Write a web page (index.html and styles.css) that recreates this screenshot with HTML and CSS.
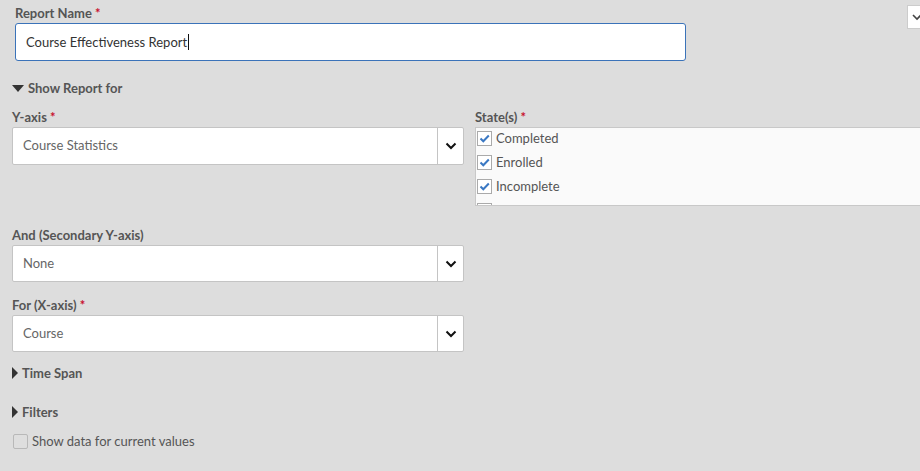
FILE: index.html
```html
<!DOCTYPE html>
<html>
<head>
<meta charset="utf-8">
<link rel="stylesheet" href="styles.css">
</head>
<body>
<div class="page">
  <div class="corner-btn"><svg width="12" height="12" viewBox="0 0 12 12"><path d="M2 4 L6 8 L10 4" fill="none" stroke="#444" stroke-width="1.6"/></svg></div>

  <div class="name-field">
    <label class="label">Report Name <span class="req">*</span></label>
    <div class="text-input">Course Effectiveness Report<span class="caret"></span></div>
  </div>

  <div class="section open"><span class="tri-down"></span>Show Report for</div>

  <div class="grid">
    <div class="field">
      <label class="label">Y-axis <span class="req">*</span></label>
      <div class="select"><span class="value">Course Statistics</span><span class="arrow"><svg width="12" height="8" viewBox="0 0 12 8"><path d="M1.5 1.5 L6 6 L10.5 1.5" fill="none" stroke="#111" stroke-width="2"/></svg></span></div>
    </div>
    <div class="field">
      <label class="label">State(s) <span class="req">*</span></label>
      <div class="listbox">
        <div class="opt"><span class="cb checked"><svg width="13" height="13" viewBox="0 0 13 13"><path d="M2.5 6.5 L5.3 9.3 L10.8 3.5" fill="none" stroke="#3a78c3" stroke-width="2"/></svg></span>Completed</div>
        <div class="opt"><span class="cb checked"><svg width="13" height="13" viewBox="0 0 13 13"><path d="M2.5 6.5 L5.3 9.3 L10.8 3.5" fill="none" stroke="#3a78c3" stroke-width="2"/></svg></span>Enrolled</div>
        <div class="opt"><span class="cb checked"><svg width="13" height="13" viewBox="0 0 13 13"><path d="M2.5 6.5 L5.3 9.3 L10.8 3.5" fill="none" stroke="#3a78c3" stroke-width="2"/></svg></span>Incomplete</div>
        <div class="opt"><span class="cb"></span></div>
      </div>
    </div>
  </div>

  <div class="field single gap-and">
    <label class="label">And (Secondary Y-axis)</label>
    <div class="select"><span class="value">None</span><span class="arrow"><svg width="12" height="8" viewBox="0 0 12 8"><path d="M1.5 1.5 L6 6 L10.5 1.5" fill="none" stroke="#111" stroke-width="2"/></svg></span></div>
  </div>

  <div class="field single gap-for">
    <label class="label">For (X-axis) <span class="req">*</span></label>
    <div class="select"><span class="value">Course</span><span class="arrow"><svg width="12" height="8" viewBox="0 0 12 8"><path d="M1.5 1.5 L6 6 L10.5 1.5" fill="none" stroke="#111" stroke-width="2"/></svg></span></div>
  </div>

  <div class="section closed gap-time"><span class="tri-right"></span>Time Span</div>
  <div class="section closed gap-filters"><span class="tri-right"></span>Filters</div>

  <div class="check-row"><span class="cb plain"></span>Show data for current values</div>
</div>
</body>
</html>
```
FILE: styles.css
```css
html, body {
  margin: 0;
  padding: 0;
  background: #dddddd;
  overflow: hidden;
}
body {
  width: 920px;
  height: 471px;
  font-family: "Lato", "Open Sans", sans-serif;
  font-size: 13px;
  color: #555;
}
.page {
  position: relative;
  padding: 4px 0 0 12px;
}
.corner-btn {
  position: absolute;
  top: 5px;
  left: 907px;
  width: 24px;
  height: 24px;
  background: #fff;
  border: 1px solid #ccc;
  box-sizing: border-box;
  display: flex;
  align-items: center;
  padding-left: 3px;
}
.label {
  display: block;
  font-weight: 700;
  line-height: 18px;
  color: #555;
  margin-bottom: 1px;
}
.req {
  color: #c8102e;
}
.name-field {
  padding-left: 3px;
}
.text-input {
  width: 671px;
  height: 38px;
  box-sizing: border-box;
  background: #fff;
  border: 1px solid #3b73b9;
  border-radius: 3px;
  display: flex;
  align-items: center;
  padding-left: 10px;
  color: #333;
}
.caret {
  display: inline-block;
  width: 1px;
  height: 16px;
  background: #111;
  margin-left: 1px;
}
.section {
  font-weight: 700;
  line-height: 18px;
  color: #555;
  display: flex;
  align-items: center;
}
.section.open {
  margin-top: 18px;
}
.tri-down {
  width: 0;
  height: 0;
  border-left: 6px solid transparent;
  border-right: 6px solid transparent;
  border-top: 7px solid #333;
  margin-right: 4px;
}
.tri-right {
  width: 0;
  height: 0;
  border-top: 6px solid transparent;
  border-bottom: 6px solid transparent;
  border-left: 6px solid #333;
  margin-right: 4px;
}
.grid {
  display: grid;
  grid-template-columns: 452px 470px;
  column-gap: 11px;
  margin-top: 11px;
}
.select {
  height: 38px;
  box-sizing: border-box;
  background: #fff;
  border: 1px solid #c4c4c4;
  border-radius: 2px;
  display: flex;
  align-items: stretch;
}
.single {
  width: 452px;
}
.single .select {
  height: 37px;
}
.select .value {
  flex: 1;
  display: flex;
  align-items: center;
  padding-left: 10px;
  padding-bottom: 2px;
  color: #666;
}
.select .arrow {
  width: 25px;
  border-left: 1px solid #c4c4c4;
  display: flex;
  align-items: center;
  justify-content: center;
}
.listbox {
  height: 79px;
  box-sizing: border-box;
  background: #fafafa;
  border: 1px solid #c8c8c8;
  overflow: hidden;
}
.opt {
  height: 24px;
  display: flex;
  align-items: center;
  color: #555;
  padding-left: 1px;
}
.opt:first-child {
  margin-top: -2px;
}
.cb {
  width: 15px;
  height: 15px;
  box-sizing: border-box;
  border: 1px solid #aaa;
  background: #fff;
  margin-right: 4px;
  display: flex;
  align-items: center;
  justify-content: center;
}
.cb.plain {
  border-color: #b8b8b8;
  background: #dedede;
  border-radius: 2px;
  margin-right: 4px;
}
.gap-and {
  margin-top: 20px;
}
.gap-for {
  margin-top: 14px;
}
.gap-time {
  margin-top: 12px;
}
.gap-filters {
  margin-top: 21px;
}
.check-row {
  margin-top: 11px;
  display: flex;
  align-items: center;
  line-height: 18px;
  color: #555;
  padding-left: 1px;
}
```
